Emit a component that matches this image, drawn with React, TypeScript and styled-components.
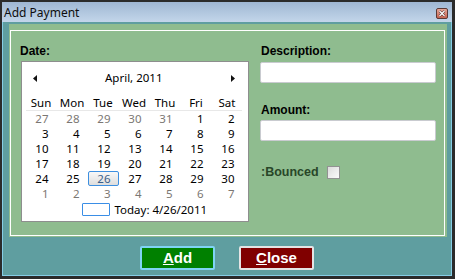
import React from 'react'
import styled, { createGlobalStyle } from 'styled-components'

const GlobalStyle = createGlobalStyle`
  html, body {
    margin: 0;
    padding: 0;
    background: #2b2b2b;
  }
  * {
    box-sizing: border-box;
  }
`

const days = ['Sun', 'Mon', 'Tue', 'Wed', 'Thu', 'Fri', 'Sat']

const weeks: { n: number; muted?: boolean }[][] = [
  [{ n: 27, muted: true }, { n: 28, muted: true }, { n: 29, muted: true }, { n: 30, muted: true }, { n: 31, muted: true }, { n: 1 }, { n: 2 }],
  [{ n: 3 }, { n: 4 }, { n: 5 }, { n: 6 }, { n: 7 }, { n: 8 }, { n: 9 }],
  [{ n: 10 }, { n: 11 }, { n: 12 }, { n: 13 }, { n: 14 }, { n: 15 }, { n: 16 }],
  [{ n: 17 }, { n: 18 }, { n: 19 }, { n: 20 }, { n: 21 }, { n: 22 }, { n: 23 }],
  [{ n: 24 }, { n: 25 }, { n: 26 }, { n: 27 }, { n: 28 }, { n: 29 }, { n: 30 }],
  [{ n: 1, muted: true }, { n: 2, muted: true }, { n: 3, muted: true }, { n: 4, muted: true }, { n: 5, muted: true }, { n: 6, muted: true }, { n: 7, muted: true }],
]

const App: React.FC = () => {
  return (
    <>
      <GlobalStyle />
      <Window>
        <TitleBar>
          <TitleText>Add Payment</TitleText>
          <CloseBox aria-label="close">
            <svg width="12" height="11" viewBox="0 0 12 11">
              <defs>
                <linearGradient id="cx" x1="0" y1="0" x2="0" y2="1">
                  <stop offset="0" stopColor="#e8aa9c" />
                  <stop offset="1" stopColor="#c4604c" />
                </linearGradient>
              </defs>
              <rect x="0.5" y="0.5" width="11" height="10" rx="1.5" fill="url(#cx)" stroke="#5a3a36" />
              <path d="M3.5 3 L8.5 8 M8.5 3 L3.5 8" stroke="#4a2a26" strokeWidth="2.4" />
              <path d="M3.5 3 L8.5 8 M8.5 3 L3.5 8" stroke="#ffffff" strokeWidth="1.3" />
            </svg>
          </CloseBox>
        </TitleBar>
        <Body>
          <Panel>
            <GroupBox>
              <LeftColumn>
                <FieldLabel>Date:</FieldLabel>
                <Calendar>
                  <MonthHeader>
                    <Arrow viewBox="0 0 4 7" width="4" height="7">
                      <path d="M4 0 L0 3.5 L4 7 Z" fill="#111" />
                    </Arrow>
                    <MonthTitle>April, 2011</MonthTitle>
                    <Arrow viewBox="0 0 4 7" width="4" height="7">
                      <path d="M0 0 L4 3.5 L0 7 Z" fill="#111" />
                    </Arrow>
                  </MonthHeader>
                  <DayNames>
                    {days.map((d) => (
                      <DayName key={d}>{d}</DayName>
                    ))}
                  </DayNames>
                  <DaysGrid>
                    {weeks.flat().map((d, i) => (
                      <DayCell key={i} $muted={d.muted} $selected={!d.muted && d.n === 26}>
                        {d.n}
                      </DayCell>
                    ))}
                  </DaysGrid>
                  <TodayRow>
                    <TodayMark />
                    <span>Today: 4/26/2011</span>
                  </TodayRow>
                </Calendar>
              </LeftColumn>
              <RightColumn>
                <FieldLabel $indent={1}>Description:</FieldLabel>
                <TextBox $gap={4} />
                <FieldLabel $top={20} $indent={1}>Amount:</FieldLabel>
                <TextBox $gap={3} />
                <CheckRow>
                  <CheckLabel>:Bounced</CheckLabel>
                  <CheckBox />
                </CheckRow>
              </RightColumn>
            </GroupBox>
          </Panel>
          <ButtonRow>
            <ActionButton $bg="#008000" $edge="#7fd4f4">
              <u>A</u>dd
            </ActionButton>
            <ActionButton $bg="#800000" $edge="#e4e4e4">
              <u>C</u>lose
            </ActionButton>
          </ButtonRow>
        </Body>
      </Window>
    </>
  )
}

const Window = styled.div`
  width: 455px;
  height: 279px;
  display: flex;
  flex-direction: column;
  border: 2px solid #2b2b2b;
  border-bottom-width: 3px;
  border-right-width: 3px;
  background: #2b2b2b;
`

const TitleBar = styled.div`
  height: 20px;
  display: flex;
  align-items: center;
  justify-content: space-between;
  padding: 0 2px 0 2px;
  background: linear-gradient(#9fb7d3, #c3d6ea);
`

const TitleText = styled.span`
  font-family: 'Noto Sans', sans-serif;
  font-size: 12px;
  color: #0e0e0e;
  padding-top: 1px;
`

const CloseBox = styled.div`
  width: 12px;
  height: 11px;
  margin-right: 2px;
  margin-top: 3px;
  display: flex;

  svg {
    display: block;
  }
`

const Body = styled.div`
  flex: 1;
  display: flex;
  flex-direction: column;
  background: #5f9ea0;
  border: 1px solid #86cde6;
  border-top: none;
`

const Panel = styled.div`
  margin: 2px 0 0 6px;
  width: 438px;
  height: 213px;
  background: #8fbc8f;
  padding: 6px 2px 1px 1px;
`

const GroupBox = styled.div`
  height: 100%;
  border: 1px solid #ffffff;
  display: flex;
  padding: 13px 0 0 9px;
`

const LeftColumn = styled.div`
  display: flex;
  flex-direction: column;
  width: 229px;
`

const RightColumn = styled.div`
  display: flex;
  flex-direction: column;
  margin-left: 11px;
  width: 176px;
`

const FieldLabel = styled.div<{ $top?: number; $indent?: number }>`
  font-family: 'Liberation Sans', Arial, sans-serif;
  font-weight: bold;
  font-size: 12px;
  line-height: 14px;
  color: #000;
  margin-top: ${(p) => p.$top ?? 0}px;
  padding-left: ${(p) => p.$indent ?? 0}px;
`

const Calendar = styled.div`
  margin: 3px 0 0 1px;
  width: 228px;
  height: 161px;
  background: #fff;
  border: 1px solid #8e8e8e;
  font-family: 'Noto Sans', sans-serif;
  font-size: 11.5px;
  color: #000;
  padding: 0 6px 0 3.5px;
`

const MonthHeader = styled.div`
  height: 16px;
  margin-top: 8px;
  display: flex;
  align-items: center;
  justify-content: space-between;
  padding: 0 7px 0 7px;
`

const Arrow = styled.svg`
  display: block;
`

const MonthTitle = styled.span`
  line-height: 16px;
`

const DayNames = styled.div`
  display: grid;
  grid-template-columns: repeat(7, 31px);
  margin-top: 8.5px;
  height: 16px;
  border-bottom: 1px solid #e8e8e8;
`

const DayName = styled.span`
  text-align: center;
  line-height: 15px;
`

const DaysGrid = styled.div`
  display: grid;
  grid-template-columns: repeat(7, 31px);
  grid-auto-rows: 15px;
`

const DayCell = styled.span<{ $muted?: boolean; $selected?: boolean }>`
  text-align: right;
  padding-right: 8px;
  line-height: ${(p) => (p.$selected ? '13px' : '15px')};
  color: ${(p) => (p.$muted ? '#7b7773' : p.$selected ? '#3a5f8a' : '#000')};
  ${(p) =>
    p.$selected &&
    `
    border: 1px solid #3d8fe0;
    border-radius: 2px;
    padding-right: 7px;
    background: linear-gradient(#f8f8f8, #dedede);
  `}
`

const TodayRow = styled.div`
  height: 16px;
  margin-top: 1px;
  display: flex;
  align-items: center;
  gap: 5px;
  padding-left: 56px;
`

const TodayMark = styled.span`
  width: 28px;
  height: 13px;
  border: 1px solid #3a8ee6;
  border-radius: 1px;
`

const TextBox = styled.input.attrs({ type: 'text' })<{ $gap: number }>`
  margin-top: ${(p) => p.$gap}px;
  width: 176px;
  height: 21px;
  border: 1px solid #c9cbd0;
  border-radius: 2px;
  background: #fff;
  outline: none;
  padding: 0 3px;
`

const CheckRow = styled.div`
  margin-top: 24px;
  display: flex;
  align-items: center;
  gap: 8px;
  padding-left: 1px;
`

const CheckLabel = styled.span`
  font-family: 'Liberation Sans', Arial, sans-serif;
  font-weight: bold;
  font-size: 12.5px;
  color: #284628;
`

const CheckBox = styled.span`
  width: 13px;
  height: 13px;
  border: 1px solid #929292;
  background: linear-gradient(135deg, #dcdcdc, #fbfbfb);
`

const ButtonRow = styled.div`
  display: flex;
  justify-content: center;
  gap: 24px;
  margin-top: 9px;
`

const ActionButton = styled.button<{ $bg: string; $edge: string }>`
  width: 75px;
  height: 24px;
  padding: 0;
  background: ${(p) => p.$bg};
  border: 2px solid ${(p) => p.$edge};
  border-radius: 2px;
  color: #fff;
  font-family: 'Liberation Sans', Arial, sans-serif;
  font-weight: bold;
  font-size: 15px;
  line-height: 18px;
  cursor: pointer;
`

export default App
